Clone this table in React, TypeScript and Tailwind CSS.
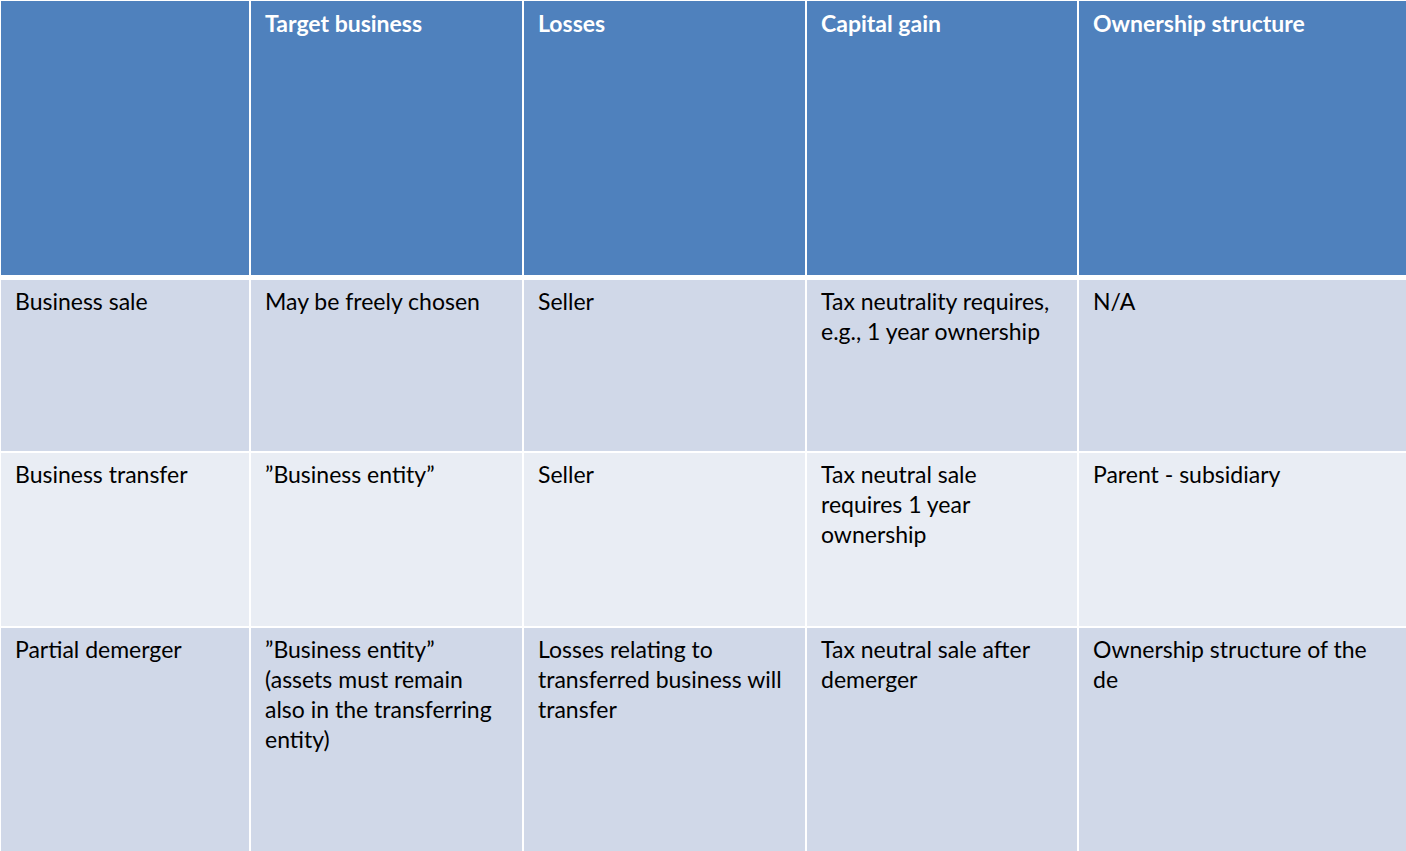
import React from "react";

const cols = "grid grid-cols-[248px_271px_281px_270px_1fr] gap-x-[2px]";

type Row = { bg: string; h: string; cells: string[][] };

const rows: Row[] = [
  {
    bg: "bg-[#d0d8e8]",
    h: "h-[171px]",
    cells: [
      ["Business sale"],
      ["May be freely chosen"],
      ["Seller"],
      ["Tax neutrality requires,", "e.g., 1 year ownership"],
      ["N/A"],
    ],
  },
  {
    bg: "bg-[#e9edf4]",
    h: "h-[173px]",
    cells: [
      ["Business transfer"],
      ["\u201dBusiness entity\u201d"],
      ["Seller"],
      ["Tax neutral sale", "requires 1 year", "ownership"],
      ["Parent - subsidiary"],
    ],
  },
  {
    bg: "bg-[#d0d8e8]",
    h: "h-[223px]",
    cells: [
      ["Partial demerger"],
      ["\u201dBusiness entity\u201d", "(assets must remain", "also in the transferring", "entity)"],
      ["Losses relating to", "transferred business will", "transfer"],
      ["Tax neutral sale after", "demerger"],
      ["Ownership structure of the", "de"],
    ],
  },
];

const headers = ["", "Target business", "Losses", "Capital gain", "Ownership structure"];

export default function App() {
  return (
    <div
      className="w-[1406px] h-[851px] overflow-hidden bg-white pt-[1px] pl-[1px] flex flex-col"
      style={{ fontFamily: "Lato, 'Open Sans', 'Liberation Sans', sans-serif" }}
    >
      <div className={`${cols} h-[274px] shrink-0`}>
        {headers.map((h, i) => (
          <div
            key={i}
            className="bg-[#4f81bd] px-[14px] pt-[7px] text-white font-bold text-[23px] leading-[30px] whitespace-nowrap"
          >
            {h}
          </div>
        ))}
      </div>
      <div className="h-[5px] shrink-0" />
      {rows.map((r, ri) => (
        <React.Fragment key={ri}>
          {ri > 0 && <div className="h-[2px] shrink-0" />}
          <div className={`${cols} ${r.h} shrink-0`}>
            {r.cells.map((lines, ci) => (
              <div
                key={ci}
                className={`${r.bg} px-[14px] pt-[6px] text-black text-[23px] leading-[30px] whitespace-nowrap`}
              >
                {lines.map((l, li) => (
                  <div key={li}>{l}</div>
                ))}
              </div>
            ))}
          </div>
        </React.Fragment>
      ))}
    </div>
  );
}
